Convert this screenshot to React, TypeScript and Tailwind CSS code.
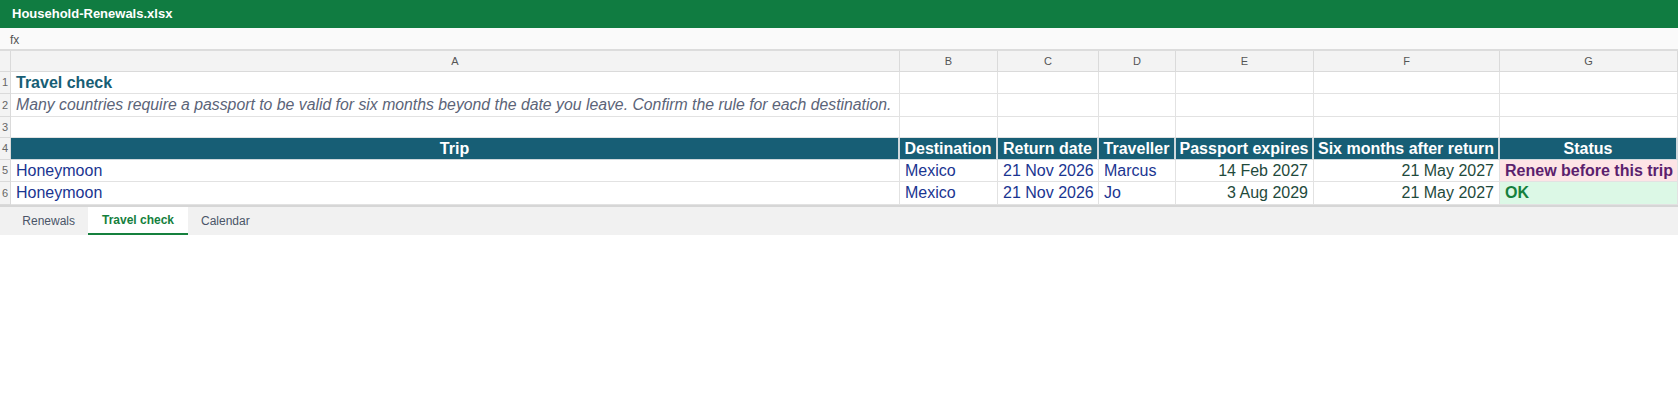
import React from "react";

const cols = ["A", "B", "C", "D", "E", "F", "G"];

type Cell = { text?: string; cls?: string };

function RowNum({ n }: { n: string }) {
  return (
    <div className="flex items-center justify-center border-r border-b border-[#dadada] bg-[#f3f3f3] text-[11px] text-[#666]">
      {n}
    </div>
  );
}

function C({ text, cls = "" }: Cell) {
  return (
    <div className={`flex items-center overflow-hidden whitespace-nowrap border-r border-b border-[#e2e2e2] px-[5px] ${cls}`}>
      {text}
    </div>
  );
}

function H({ text }: { text: string }) {
  return (
    <div className="flex items-center justify-center overflow-hidden whitespace-nowrap border-r-2 border-b border-r-[#cfd8dc] border-b-[#cfd8dc] bg-[#175e75] font-bold text-white">
      {text}
    </div>
  );
}

export default function App() {
  const data = [
    { trip: "Honeymoon", dest: "Mexico", ret: "21 Nov 2026", who: "Marcus", exp: "14 Feb 2027", six: "21 May 2027", status: "Renew before this trip", ok: false },
    { trip: "Honeymoon", dest: "Mexico", ret: "21 Nov 2026", who: "Jo", exp: "3 Aug 2029", six: "21 May 2027", status: "OK", ok: true },
  ];
  return (
    <div className="w-[1678px] h-[396px] bg-white font-['Liberation_Sans',Arial,sans-serif]">
      <div className="h-[28px] bg-[#107c41] flex items-center pl-[12px] text-[13px] font-bold text-white">
        Household-Renewals.xlsx
      </div>
      <div className="h-[23px] bg-[#fafafa] border-b-2 border-[#dcdcdc] flex items-center pl-[10px] pt-[2px] text-[12px] text-[#555]">
        fx
      </div>
      <div className="grid grid-cols-[11px_889px_98px_101px_77px_138px_186px_178px] grid-rows-[21px_22px_23px_21px_22px_22px_23px] text-[16px] border-b-2 border-[#d6d6d6]">
        <div className="border-r border-b border-[#dadada] bg-[#f3f3f3]" />
        {cols.map((c) => (
          <div key={c} className="flex items-center justify-center border-r border-b border-[#dadada] bg-[#f3f3f3] text-[11px] text-[#555]">
            {c}
          </div>
        ))}

        <RowNum n="1" />
        <C text="Travel check" cls="font-bold text-[#175e75]" />
        {[0, 1, 2, 3, 4, 5].map((i) => <C key={i} />)}

        <RowNum n="2" />
        <C text="Many countries require a passport to be valid for six months beyond the date you leave. Confirm the rule for each destination." cls="italic text-[15.8px] text-[#5b6478]" />
        {[0, 1, 2, 3, 4, 5].map((i) => <C key={i} />)}

        <RowNum n="3" />
        {[0, 1, 2, 3, 4, 5, 6].map((i) => <C key={i} />)}

        <RowNum n="4" />
        {["Trip", "Destination", "Return date", "Traveller", "Passport expires", "Six months after return", "Status"].map((h) => (
          <H key={h} text={h} />
        ))}

        {data.map((r, i) => (
          <React.Fragment key={i}>
            <RowNum n={String(i + 5)} />
            <C text={r.trip} cls="text-[#1a3591]" />
            <C text={r.dest} cls="text-[#1a3591]" />
            <C text={r.ret} cls="text-[#1a3591]" />
            <C text={r.who} cls="text-[#1a3591]" />
            <C text={r.exp} cls="justify-end text-[#1f4a3c]" />
            <C text={r.six} cls="justify-end text-[#1f4a3c]" />
            <C
              text={r.status}
              cls={r.ok ? "font-bold bg-[#dcf8e6] text-[#15803d]" : "font-bold bg-[#fde4e6] text-[#5b1f6e]"}
            />
          </React.Fragment>
        ))}
      </div>
      <div className="h-[28px] bg-[#f1f1f1] flex text-[12px]">
        <div className="w-[88px] flex items-center justify-end pr-[13px] text-[#4a5568]">Renewals</div>
        <div className="w-[100px] flex items-center justify-center bg-white border-b-2 border-[#15803d] font-bold text-[#15803d]">
          Travel check
        </div>
        <div className="flex items-center pl-[13px] text-[#4a5568]">Calendar</div>
      </div>
    </div>
  );
}
